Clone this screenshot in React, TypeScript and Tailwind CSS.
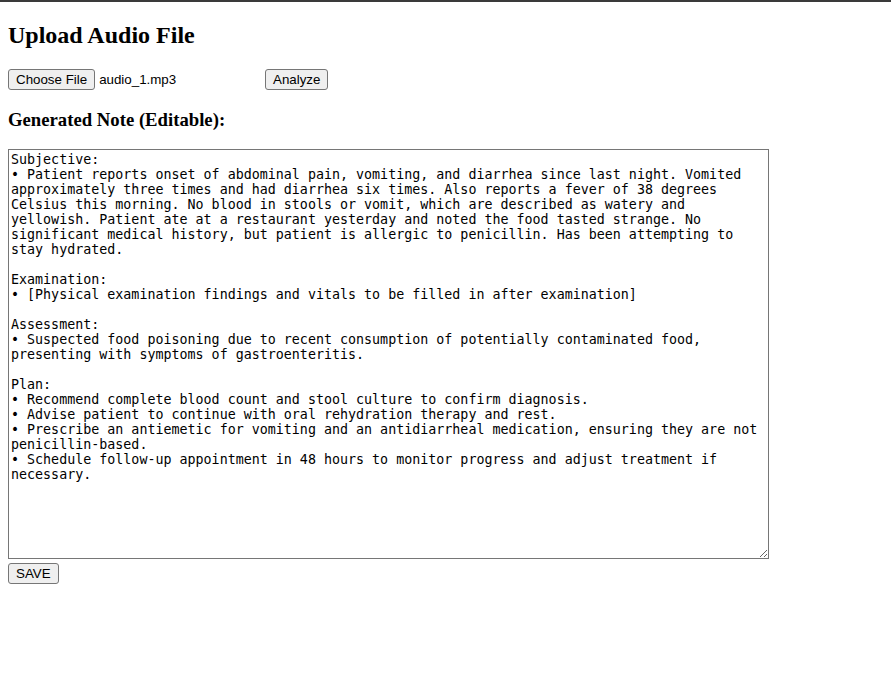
import { useState } from 'react';

const initialNote = `Subjective:
• Patient reports onset of abdominal pain, vomiting, and diarrhea since last night. Vomited approximately three times and had diarrhea six times. Also reports a fever of 38 degrees Celsius this morning. No blood in stools or vomit, which are described as watery and yellowish. Patient ate at a restaurant yesterday and noted the food tasted strange. No significant medical history, but patient is allergic to penicillin. Has been attempting to stay hydrated.

Examination:
• [Physical examination findings and vitals to be filled in after examination]

Assessment:
• Suspected food poisoning due to recent consumption of potentially contaminated food, presenting with symptoms of gastroenteritis.

Plan:
• Recommend complete blood count and stool culture to confirm diagnosis.
• Advise patient to continue with oral rehydration therapy and rest.
• Prescribe an antiemetic for vomiting and an antidiarrheal medication, ensuring they are not penicillin-based.
• Schedule follow-up appointment in 48 hours to monitor progress and adjust treatment if necessary.`;

const btn =
  "h-[21px] bg-[#efefef] border border-[#767676] rounded-[3px] px-[7px] text-[13.333px] leading-[15px] text-black font-['Liberation_Sans',Arial,sans-serif] hover:bg-[#e5e5e5]";

export default function App() {
  const [note, setNote] = useState(initialNote);
  const [fileName] = useState('audio_1.mp3');

  return (
    <div className="min-h-screen bg-white border-t-2 border-[#3a3a3a] text-black font-['Liberation_Serif','Times_New_Roman',serif]">
      <div className="px-2 pb-2 flow-root">
        <h2 className="mt-[19.92px] mb-[19.92px] text-[24px] leading-[27.6px] font-bold">Upload Audio File</h2>

        <div className="flex items-center h-[21px]">
          <div className="flex items-center w-[257px]">
            <button className={btn}>Choose File</button>
            <span className="ml-[4px] text-[13.333px] font-['Liberation_Sans',Arial,sans-serif]">{fileName}</span>
          </div>
          <button className={btn}>Analyze</button>
        </div>

        <h3 className="mt-[18.72px] mb-[18.72px] text-[18.72px] leading-[21.5px] font-bold">Generated Note (Editable):</h3>

        <div className="flex flex-col items-start gap-[4px]">
          <textarea
            value={note}
            onChange={(e) => setNote(e.target.value)}
            className="block w-[761px] h-[410px] border border-[#767676] p-[2px] bg-white text-black text-[13.333px] leading-[15px] font-['DejaVu_Sans_Mono',monospace] outline-none"
          />
          <button className={btn}>SAVE</button>
        </div>
      </div>
    </div>
  );
}
